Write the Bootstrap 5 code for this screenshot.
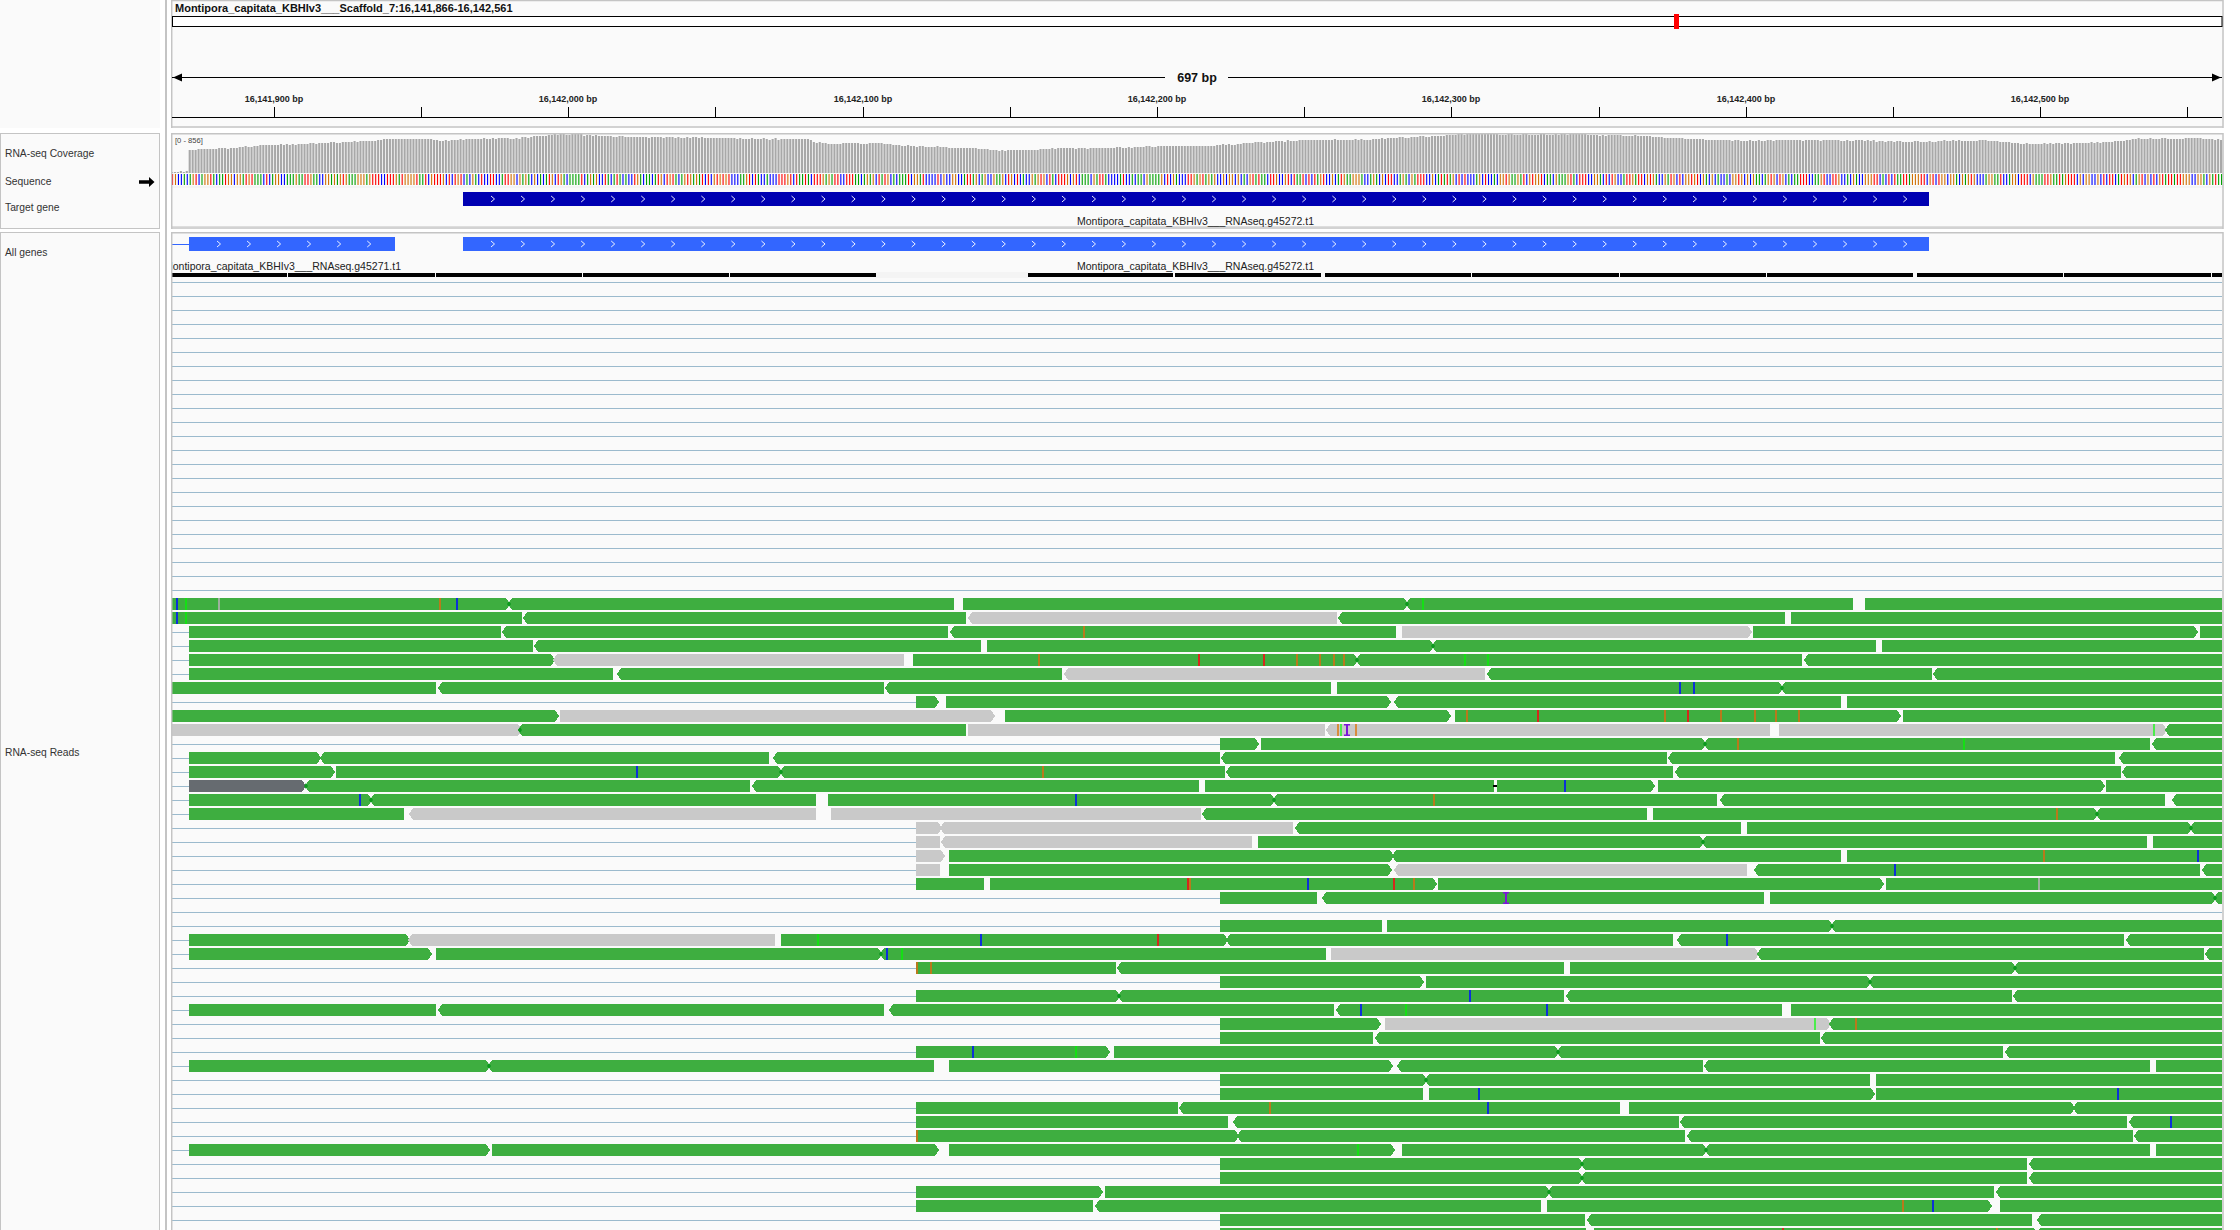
<!DOCTYPE html>
<html lang="en">
<head>
    <meta charset="UTF-8">
    <title>IGV - Montipora capitata</title>
    <link href="https://cdn.jsdelivr.net/npm/bootstrap@5.3.0/dist/css/bootstrap.min.css" rel="stylesheet">
    <style>
        html, body { height: 100%; overflow: hidden; background: #fff; }
        body { font-family: "Liberation Sans", Arial, sans-serif; }
        .igv-root { width: 2240px; height: 1230px; overflow: hidden; }
        .name-col { width: 160px; flex: none; }
        .splitter { width: 2px; flex: none; margin: 0 4px 0 5px; background: #c4c4c4; }
        .track-col { width: 2053px; flex: none; }
        .hdr-box { height: 128px; margin-bottom: 5px; background: #fafafa; }
        .seq-box { height: 96px; margin-bottom: 3px; }
        .rest-box { height: 1100px; }
        .pane { background: #fafafa; border: 1.5px solid #c4c4c4; overflow: hidden; }
        .track-col .pane { border: 0; }
        .track-col svg { display: block; }
        .trk-label { height: 14px; line-height: 14px; font-size: 10.3px; color: #333; padding-left: 4px; white-space: nowrap; }
        .lb-cov { margin-top: 13px; }
        .lb-seq { margin-top: 14px; padding-right: 4px; }
        .lb-tgt { margin-top: 12px; }
        .lb-all { margin-top: 13px; }
        .lb-reads { margin-top: 486px; }
        svg text { font-family: "Liberation Sans", Arial, sans-serif; }
        .t-title { font-size: 11px; font-weight: 700; fill: #111; }
        .t-tick { font-size: 9px; font-weight: 700; fill: #222; text-anchor: middle; }
        .t-span { font-size: 12.5px; font-weight: 700; fill: #111; text-anchor: middle; }
        .t-range { font-size: 7.6px; fill: #444; }
        .t-gene { font-size: 10.5px; fill: #222; }
        .read-shape { shape-rendering: crispEdges; }
    </style>
</head>
<body>
    <div class="igv-root d-flex">
        <div class="name-col d-flex flex-column">
            <div class="hdr-box flex-shrink-0"></div>
            <div class="pane seq-box flex-shrink-0">
                <div class="trk-label lb-cov">RNA-seq Coverage</div>
                <div class="trk-label lb-seq d-flex justify-content-between align-items-center">
                    <span>Sequence</span>
                    <svg width="16" height="10" viewBox="0 0 16 10"><path d="M0 3.2H10V0L15.5 5L10 10V6.8H0Z" fill="#000"/></svg>
                </div>
                <div class="trk-label lb-tgt">Target gene</div>
            </div>
            <div class="pane rest-box flex-shrink-0">
                <div class="trk-label lb-all">All genes</div>
                <div class="trk-label lb-reads">RNA-seq Reads</div>
            </div>
        </div>
        <div class="splitter"></div>
        <div class="track-col d-flex flex-column">
            <div class="pane hdr-box flex-shrink-0">
                <svg id="hdrSvg" width="2053" height="128" viewBox="171 0 2053 128"></svg>
            </div>
            <div class="pane seq-box flex-shrink-0">
                <svg id="seqSvg" width="2053" height="96" viewBox="171 133 2053 96"></svg>
            </div>
            <div class="pane rest-box flex-shrink-0">
                <svg id="readSvg" width="2053" height="1100" viewBox="171 232 2053 1100"></svg>
            </div>
        </div>
    </div>

    <script>
        const LEFT = 172, RIGHT = 2222;

        const rect = (x, y, w, h, fill, extra = '') => `<rect x="${x}" y="${y}" width="${w}" height="${h}" fill="${fill}" ${extra}/>`;
        const hline = (y, x1, x2, col, w = 1) => `<line x1="${x1}" x2="${x2}" y1="${y}" y2="${y}" stroke="${col}" stroke-width="${w}"/>`;

        // small seeded random, so the picture stays the same between runs
        let seed = 20240611;
        function rnd() {
            seed = (seed * 1664525 + 1013904223) % 4294967296;
            return seed / 4294967296;
        }

        // ---- header: chromosome bar, span arrow and ruler ----
        function drawHeader() {
            let s = '';
            s += hline(0.5, 171, 2223, '#c4c4c4', 1.5) + hline(127, 171, 2223, '#c4c4c4', 1.5);
            s += `<line x1="171.7" x2="171.7" y1="0" y2="128" stroke="#c4c4c4" stroke-width="1.5"/>`;
            s += `<line x1="2223" x2="2223" y1="0" y2="128" stroke="#c4c4c4" stroke-width="1.5"/>`;
            s += `<text class="t-title" x="175" y="12">Montipora_capitata_KBHIv3___Scaffold_7:16,141,866-16,142,561</text>`;
            s += `<rect x="172.5" y="16.5" width="2049.5" height="10" fill="#fff" stroke="#000" stroke-width="1"/>`;
            s += rect(1674, 14, 5, 15, '#f00');
            s += hline(77.5, 172, 1165, '#000') + hline(77.5, 1228, 2222, '#000');
            s += `<path d="M173 77.5L182 73.5V81.5Z" fill="#000"/><path d="M2221 77.5L2212 73.5V81.5Z" fill="#000"/>`;
            s += `<text class="t-span" x="1197" y="82">697 bp</text>`;
            const labels = ['16,141,900 bp', '16,142,000 bp', '16,142,100 bp', '16,142,200 bp', '16,142,300 bp', '16,142,400 bp', '16,142,500 bp'];
            for (let i = 0; i < 14; i++) {
                const x = Math.round(273.7 + 147.2 * i) + 0.5;
                s += `<line x1="${x}" x2="${x}" y1="107" y2="117" stroke="#000" stroke-width="1"/>`;
                if (i % 2 === 0) s += `<text class="t-tick" x="${x - 0.5}" y="102">${labels[i / 2]}</text>`;
            }
            s += hline(117.5, 172, 2222, '#000');
            document.getElementById('hdrSvg').innerHTML = s;
        }

        // ---- coverage and sequence ----
        // top of the coverage bars along x, read off the reference
        const covTop = [[188,150],[232,148],[250,146],[285,144.5],[370,141],[395,139],[430,139],[440,141],[470,139],[520,138],[550,135],[562,134],[600,136],[640,137],[707,137.7],[752,139],[808,139],[817,142.3],[831,144],[881,143.3],[904,145.7],[977,148.3],[999,151],[1022,150],[1061,148.3],[1117,147.7],[1173,146],[1201,146],[1257,142.7],[1302,140],[1370,139.5],[1381,138.3],[1448,135.7],[1459,134],[1482,134],[1500,135],[1561,134],[1641,136],[1689,139],[1736,140.7],[1830,140],[1901,141.7],[1948,141],[1986,140.3],[2029,144],[2057,143.3],[2113,142],[2132,139],[2194,138],[2222,140]];

        function topAt(x) {
            if (x < 188) return 171.5;
            for (let i = 1; i < covTop.length; i++) {
                if (x <= covTop[i][0]) {
                    const a = covTop[i - 1], b = covTop[i];
                    return a[1] + (b[1] - a[1]) * (x - a[0]) / (b[0] - a[0]);
                }
            }
            return 140;
        }

        function drawGene(x1, x2, y, col, firstChevron) {
            let s = rect(x1, y, x2 - x1, 14, col);
            for (let x = firstChevron; x < x2 - 10; x += 30.05) {
                s += `<path d="M${x} ${y + 4}L${x + 3.5} ${y + 7}L${x} ${y + 10}" fill="none" stroke="#fff" stroke-width="0.9"/>`;
            }
            return s;
        }

        function drawSequence() {
            let s = '';
            const bases = ['#00a000', '#0000ff', '#d17105', '#ff0000'];
            for (let i = 0; i < 697; i++) {
                const x = 171 + 2.944 * i;
                const t = Math.round(topAt(x + 1) + (rnd() - 0.5) * 1.2);
                s += rect(x.toFixed(2), t, 2.1, 173 - t, '#a8a8a8');
                s += rect((x + 1).toFixed(2), 174, 1.1, 11, bases[Math.floor(rnd() * 4)]);
            }
            s += hline(187, 171, 2223, '#eee');
            s += hline(226.5, 171, 2223, '#ddd');
            s += `<text class="t-range" x="175" y="143">[0 - 856]</text>`;
            s += drawGene(463, 1929, 192, '#0000b2', 491);
            s += `<text class="t-gene" x="1077" y="225">Montipora_capitata_KBHIv3___RNAseq.g45272.t1</text>`;
            s += hline(228, 171, 2223, '#c4c4c4', 1.5) + hline(133.7, 171, 2223, '#c4c4c4', 1.5);
            s += `<line x1="171.7" x2="171.7" y1="133" y2="229" stroke="#c4c4c4" stroke-width="1.5"/>`;
            s += `<line x1="2223" x2="2223" y1="133" y2="229" stroke="#c4c4c4" stroke-width="1.5"/>`;
            document.getElementById('seqSvg').innerHTML = s;
        }

        // ---- reads ----
        // one line per row: "start-end" + r/l for the arrow tip + g/d for grey/dark.
        // second part is the mismatch ticks, D = the dark overlap diamond
        const readRows = [
            ['171-510r 508-954l 963-1408r 1406-1853l 1865-2222', 'b177 L186 a219 o440 b457 L1423 D509 D1407'],
            ['171-522 523-966l 968-1337lg 1338-1785l 1791-2222', 'b177 L186'],
            ['189-501 502-948l 950-1396l 1402-1752rg 1753-2198r 2200-2222', 'o1084'],
            ['189-533 534-981l 987-1434r 1432-1876l 1882-2222', 'D1433'],
            ['189-555r 553-904lg 913-1358r 1356-1802l 1804-2222l', 'o1039 R1199 R1264 o1297 o1320 o1334 o1344 L1465 L1488 D1357'],
            ['189-613 617-1062l 1064-1485lg 1487-1932l 1933-2222l', ''],
            ['171-436 438-884l 885-1331l 1337-1783r 1781-2222l', 'b1680 b1694 D1782'],
            ['916-939r 946-1391r 1394-1841l 1847-2222', ''],
            ['171-559r 560-995rg 1005-1451r 1455-1901r 1903-2222', 'o1467 R1538 o1665 R1688 o1721 o1755 o1776 o1799'],
            ['171-522rg 518-966l 968-1325g 1326-1770lg 1779-2167rg 2165-2222l', 'O1338 M1341 I1347 O1356 M2154 D520'],
            ['1220-1259r 1261-1706r 1704-2150l 2152-2222l', 'o1738 L1964 D1705'],
            ['189-321r 320-769l 773-1220l 1221-1667l 1668-2115l 2119-2222l', ''],
            ['189-335r 336-782r 780-1225l 1226-1673l 1675-2121l 2122-2222l', 'b637 o1043 D781'],
            ['189-306rd 305-750l 752-1199l 1205-1494 1497-1655r 1658-2105r 2106-2222', 'b1565 K1495 D306'],
            ['189-372r 370-816l 828-1275r 1273-1717l 1720-2165l 2172-2222l', 'b360 b1076 o1434 D371 D1274'],
            ['189-404 409-816lg 831-1201g 1202-1647l 1653-2098r 2096-2222l', 'o2057 D2097'],
            ['916-942rg 940-1293lg 1295-1741l 1747-2192r 2190-2222l', 'D2191'],
            ['916-940g 941-1252lg 1258-1704r 1702-2147l 2153-2222', 'D1703'],
            ['916-945rg 949-1394r 1392-1841l 1847-2222', 'o2044 b2198'],
            ['916-940g 949-1392r 1394-1747lg 1754-2200l 2202-2222l', 'b1895'],
            ['916-984 990-1437r 1438-1884r 1886-2222', 'R1188 o1190 b1308 R1394 o1414 a2039'],
            ['1220-1317 1322-1764l 1770-2216r 2214-2222l', 'I1506 D2215'],
            ['', ''],
            ['1220-1382 1387-1833r 1831-2222l', 'D1832'],
            ['189-410r 408-775lg 781-1228r 1226-1673l 1677-2124l 2126-2222l', 'L818 b981 R1158 b1727'],
            ['189-432r 436-882r 880-1326l 1331-1759rg 1757-2204l 2205-2222l', 'b887 L902 D881'],
            ['916-1116 1117-1564l 1570-2016r 2014-2222l', 'o917 o931 D2015'],
            ['1220-1424r 1426-1871r 1869-2222l', 'D1870'],
            ['916-1120r 1118-1564l 1566-2012l 2013-2222l', 'b1470 D1119'],
            ['189-436 438-884l 889-1334l 1336-1782l 1791-2222', 'b1361 L1406 b1547'],
            ['1220-1381r 1385-1831rg 1829-2222l', 'M1815 o1856'],
            ['1220-1373 1375-1820l 1821-2222l', ''],
            ['916-1110r 1114-1559r 1557-2003l 2005-2222l', 'b973 L1076 D1558'],
            ['189-490r 488-934l 949-1393r 1397-1703l 1704-2150l 2156-2222', 'D489'],
            ['1220-1427r 1425-1870l 1876-2222', 'D1426'],
            ['1220-1423 1429-1875r 1876-2222', 'b1479 b2118'],
            ['916-1178 1179-1620l 1629-2075r 2073-2222l', 'o1270 b1488'],
            ['916-1228 1233-1679l 1680-2127l 2129-2222l', 'b2171'],
            ['916-1239r 1237-1685l 1687-2133l 2134-2222l', 'o917'],
            ['189-490r 492-939r 949-1395r 1402-1707r 1705-2150l 2156-2222', 'L1358 D1706'],
            ['1220-1583r 1581-2027l 2029-2222l', 'D1582'],
            ['1220-1583r 1581-2027l 2029-2222l', 'D1582'],
            ['916-1103r 1105-1550r 1548-1994l 1996-2222l', 'D1549'],
            ['916-1093 1095-1541l 1547-1992r 2000-2222', 'o1903 b1933'],
            ['1220-1585 1587-2032l 2037-2222l', ''],
            ['1220-1586 1594-2038r 2036-2222l', 'R1783 o1997']
        ];

        const tickCols = { b: '#0c30d8', L: '#14e014', o: '#b87a1c', R: '#d4281c', a: '#9db09d', O: '#d88c3c', M: '#4cec4c' };

        function readPoly(x1, x2, y, tip, col) {
            const h = 12, t = 4;
            let p;
            if (tip === 'r') p = `${x1},${y} ${x2 - t},${y} ${x2},${y + h / 2} ${x2 - t},${y + h} ${x1},${y + h}`;
            else if (tip === 'l') p = `${x1 + t},${y} ${x2},${y} ${x2},${y + h} ${x1 + t},${y + h} ${x1},${y + h / 2}`;
            else p = `${x1},${y} ${x2},${y} ${x2},${y + h} ${x1},${y + h}`;
            return `<polygon class="read-shape" points="${p}" fill="${col}"/>`;
        }

        function drawReads() {
            let s = '';
            s += drawGene(463, 1929, 237, '#3366ff', 491);
            s += hline(244.5, 172, 189, '#3366ff', 1);
            s += drawGene(189, 395, 237, '#3366ff', 217);
            s += `<text class="t-gene" x="401" y="270" text-anchor="end">Montipora_capitata_KBHIv3___RNAseq.g45271.t1</text>`;
            s += `<text class="t-gene" x="1077" y="270">Montipora_capitata_KBHIv3___RNAseq.g45272.t1</text>`;

            // black bars under the gene names
            const bars = [[172,287],[288,435],[436,582],[583,729],[730,876],[1028,1173],[1175,1321],[1325,1471],[1472,1619],[1620,1766],[1767,1913],[1917,2063],[2064,2211],[2212,2222]];
            s += rect(876, 272, 152, 6, '#f4f4f4');
            bars.forEach(b => { s += rect(b[0], 273, b[1] - b[0], 4, '#000'); });

            // empty alignment rows above the first read
            for (let n = 0; n < 23; n++) s += hline(282.5 + 14 * n, 172, RIGHT, '#9bbacd');

            readRows.forEach((row, k) => {
                const y = 598 + 14 * k;
                const reads = row[0] ? row[0].split(' ') : [];
                const firstX = reads.length ? parseInt(reads[0]) : RIGHT;
                if (firstX > LEFT) s += hline(y + 6.5, 172, firstX, '#9bbacd');
                reads.forEach(tok => {
                    const m = tok.match(/^(\d+)-(\d+)([rl]?)([gd]?)$/);
                    const col = m[4] === 'g' ? '#c9c9c9' : m[4] === 'd' ? '#666b70' : '#3eae40';
                    s += readPoly(+m[1], +m[2], y, m[3], col);
                });
                (row[1] ? row[1].split(' ') : []).forEach(tok => {
                    const kind = tok[0], x = +tok.slice(1);
                    if (kind === 'D') {
                        s += `<polygon points="${x - 2},${y + 6} ${x},${y + 3} ${x + 2},${y + 6} ${x},${y + 9}" fill="#0c9a1e"/>`;
                    } else if (kind === 'I') {
                        s += rect(x - 1, y, 2, 12, '#7a18d8') + rect(x - 3, y, 6, 1.5, '#7a18d8') + rect(x - 3, y + 10.5, 6, 1.5, '#7a18d8');
                    } else if (kind === 'K') {
                        s += rect(x - 2, y + 5, 4, 2, '#000');
                    } else {
                        s += rect(x - 1, y, 2, 12, tickCols[kind]);
                    }
                });
            });

            s += `<line x1="171.7" x2="171.7" y1="232" y2="1332" stroke="#c4c4c4" stroke-width="1.5"/>`;
            s += `<line x1="2223" x2="2223" y1="232" y2="1332" stroke="#c4c4c4" stroke-width="1.5"/>`;
            s += hline(232.7, 171, 2223, '#c4c4c4', 1.5);
            document.getElementById('readSvg').innerHTML = s;
        }

        drawHeader();
        drawSequence();
        drawReads();
    </script>
    <script src="https://cdn.jsdelivr.net/npm/bootstrap@5.3.0/dist/js/bootstrap.bundle.min.js"></script>
</body>
</html>
